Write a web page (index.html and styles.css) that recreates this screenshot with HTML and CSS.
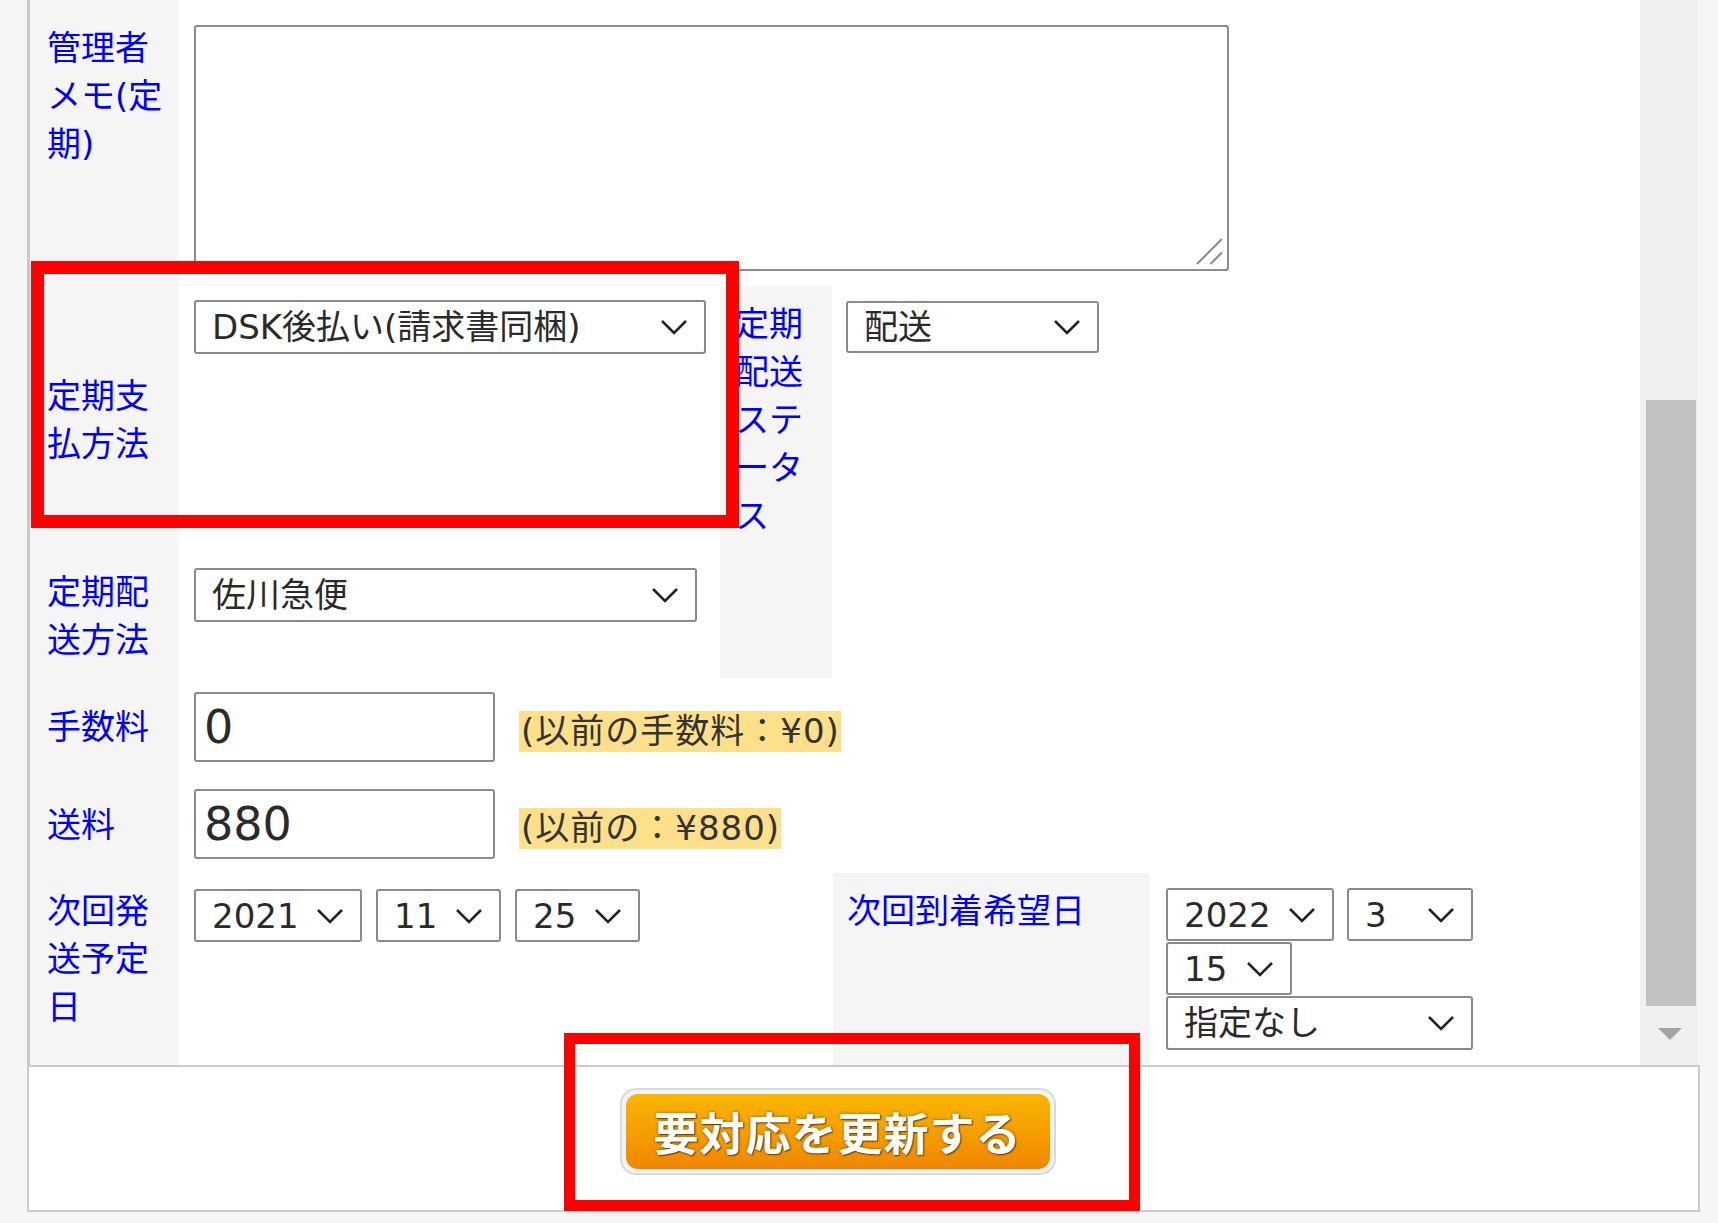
FILE: index.html
```html
<!DOCTYPE html>
<html>
<head>
  <meta charset="UTF-8">
  <title>定期受注編集</title>
  <link rel="stylesheet" href="styles.css">
</head>
<body>
<div class="panel">
  <div class="panel-body">

    <!-- 管理者メモ -->
    <div class="row row-memo">
      <div class="label label-top">管理者メモ(定期)</div>
      <div class="value value-memo">
        <div class="memo-wrap">
          <textarea class="memo"></textarea>
          <svg class="grip" viewBox="0 0 28 28">
            <line x1="2" y1="26" x2="26" y2="2"/>
            <line x1="15" y1="26" x2="26" y2="15"/>
          </svg>
        </div>
      </div>
    </div>

    <!-- 支払方法 / 配送方法 / ステータス -->
    <div class="grid-pay">
      <div class="label label-pay">定期支払方法</div>
      <div class="value value-pay">
        <div class="select select-pay">
          <select><option>DSK後払い(請求書同梱)</option></select>
          <svg viewBox="0 0 28 16"><polyline points="2,2 14,14 26,2"/></svg>
        </div>
      </div>
      <div class="label label-status">定期配送ステータス</div>
      <div class="value value-status">
        <div class="select select-status">
          <select><option>配送</option></select>
          <svg viewBox="0 0 28 16"><polyline points="2,2 14,14 26,2"/></svg>
        </div>
      </div>
      <div class="label label-ship">定期配送方法</div>
      <div class="value value-ship">
        <div class="select select-ship">
          <select><option>佐川急便</option></select>
          <svg viewBox="0 0 28 16"><polyline points="2,2 14,14 26,2"/></svg>
        </div>
      </div>
    </div>

    <!-- 手数料 -->
    <div class="row row-fee">
      <div class="label">手数料</div>
      <div class="value value-money">
        <input class="money" type="text" value="0">
        <span class="prev">(以前の手数料：¥0)</span>
      </div>
    </div>

    <!-- 送料 -->
    <div class="row row-postage">
      <div class="label">送料</div>
      <div class="value value-money">
        <input class="money" type="text" value="880">
        <span class="prev">(以前の：¥880)</span>
      </div>
    </div>

    <!-- 次回日付 -->
    <div class="grid-date">
      <div class="label label-top label-next">次回発送予定日</div>
      <div class="value value-next">
        <div class="select select-year">
          <select><option>2021</option></select>
          <svg viewBox="0 0 28 16"><polyline points="2,2 14,14 26,2"/></svg>
        </div>
        <div class="select select-day">
          <select><option>11</option></select>
          <svg viewBox="0 0 28 16"><polyline points="2,2 14,14 26,2"/></svg>
        </div>
        <div class="select select-day">
          <select><option>25</option></select>
          <svg viewBox="0 0 28 16"><polyline points="2,2 14,14 26,2"/></svg>
        </div>
      </div>
      <div class="label label-top label-arrive">次回到着希望日</div>
      <div class="value value-arrive">
        <div class="date-line">
          <div class="select select-year">
            <select><option>2022</option></select>
            <svg viewBox="0 0 28 16"><polyline points="2,2 14,14 26,2"/></svg>
          </div>
          <div class="select select-day2">
            <select><option>3</option></select>
            <svg viewBox="0 0 28 16"><polyline points="2,2 14,14 26,2"/></svg>
          </div>
        </div>
        <div class="date-line">
          <div class="select select-day2">
            <select><option>15</option></select>
            <svg viewBox="0 0 28 16"><polyline points="2,2 14,14 26,2"/></svg>
          </div>
        </div>
        <div class="date-line">
          <div class="select select-time">
            <select><option>指定なし</option></select>
            <svg viewBox="0 0 28 16"><polyline points="2,2 14,14 26,2"/></svg>
          </div>
        </div>
      </div>
    </div>

  </div>

  <div class="scrollbar">
    <div class="scroll-thumb"></div>
    <div class="scroll-arrow"></div>
  </div>
</div>

<div class="footer">
  <div class="btn-frame">
    <button class="update-button">要対応を更新する</button>
  </div>
</div>

<!-- 注釈の赤枠 -->
<div class="mark mark-pay"></div>
<div class="mark mark-button"></div>
</body>
</html>
```

FILE: styles.css
```css
* {
  box-sizing: border-box;
}

body {
  margin: 0;
  width: 1718px;
  height: 1223px;
  overflow: hidden;
  position: relative;
  background-color: #f5f5f5;
  font-family: "DejaVu Sans", "Noto Sans CJK JP", sans-serif;
  font-size: 34px;
  line-height: 48px;
  color: #222;
}

.panel {
  display: flex;
  margin-left: 27px;
  width: 1671px;
  height: 1065px;
  border-left: 3px solid #c9c9c9;
  background: #fff;
}

.panel-body {
  flex: 1;
}

/* rows */
.row {
  display: flex;
}

.label {
  width: 149px;
  flex: none;
  display: flex;
  align-items: center;
  padding: 0 8px 0 17px;
  background: #f5f5f5;
  color: #0000ff;
}

.label-top {
  align-items: flex-start;
}

.value {
  flex: 1;
}

.row-memo {
  height: 286px;
}

.row-memo .label {
  padding-top: 24px;
}

.value-memo {
  padding: 25px 0 0 15px;
}

.memo-wrap {
  position: relative;
  width: 1035px;
  height: 246px;
}

.memo {
  display: block;
  width: 100%;
  height: 100%;
  border: 2px solid #8a8a8a;
  border-radius: 3px;
  resize: none;
  background: #fff;
}

.grip {
  position: absolute;
  right: 5px;
  bottom: 5px;
  width: 29px;
  height: 29px;
  stroke: #8a8a8a;
  stroke-width: 2;
}

/* payment / shipping grid */
.grid-pay {
  display: grid;
  grid-template-columns: 149px 541px 112px 1fr;
  grid-template-rows: 268px 124px;
}

.label-pay {
  grid-column: 1;
  grid-row: 1;
}

.value-pay {
  grid-column: 2;
  grid-row: 1;
  padding: 14px 0 0 15px;
}

.label-status {
  grid-column: 3;
  grid-row: 1 / 3;
  width: auto;
  align-items: flex-start;
  padding: 14px 0 0 15px;
}

.value-status {
  grid-column: 4;
  grid-row: 1 / 3;
  padding: 15px 0 0 14px;
}

.label-ship {
  grid-column: 1;
  grid-row: 2;
}

.value-ship {
  grid-column: 2;
  grid-row: 2;
  padding: 14px 0 0 15px;
}

/* selects */
.select {
  position: relative;
  display: inline-block;
  flex: none;
  height: 54px;
}

.select select {
  -webkit-appearance: none;
  appearance: none;
  display: block;
  width: 100%;
  height: 100%;
  margin: 0;
  padding: 0 0 0 16px;
  font: inherit;
  font-size: 34px;
  color: #2a2a2a;
  background: #fff;
  border: 2px solid #8a8a8a;
  border-radius: 3px;
}

.select svg {
  position: absolute;
  right: 18px;
  top: 50%;
  margin-top: -8px;
  width: 28px;
  height: 16px;
  fill: none;
  stroke: #222;
  stroke-width: 2.6;
  pointer-events: none;
}

.select-pay {
  width: 512px;
}

.select-ship {
  width: 503px;
}

.select-status {
  width: 253px;
  height: 52px;
}

.select-year {
  width: 168px;
  height: 53px;
}

.select-day {
  width: 125px;
  height: 53px;
}

.select-day2 {
  width: 126px;
  height: 53px;
}

.select-time {
  width: 307px;
  height: 54px;
}

/* money */
.row-fee {
  height: 98px;
}

.row-postage {
  height: 97px;
}

.value-money {
  display: flex;
  align-items: flex-start;
  padding-left: 15px;
}

.money {
  width: 301px;
  height: 70px;
  margin: 14px 0 0;
  padding: 0 8px;
  font: inherit;
  font-size: 46px;
  color: #2a2a2a;
  border: 2px solid #8a8a8a;
  border-radius: 3px;
}

.row-postage .money {
  margin-top: 13px;
}

.prev {
  margin: 33px 0 0 24px;
  padding: 0 1px 0 2px;
  height: 41px;
  line-height: 41px;
  letter-spacing: 1px;
  background: #ffe08a;
  color: #333;
}

.row-postage .prev {
  margin-top: 32px;
}

/* dates */
.grid-date {
  display: grid;
  grid-template-columns: 149px 654px 317px 1fr;
  height: 192px;
}

.label-next {
  padding-top: 14px;
}

.value-next {
  display: flex;
  align-items: flex-start;
  gap: 14px;
  padding: 16px 0 0 15px;
}

.label-arrive {
  width: auto;
  padding: 14px 0 0 14px;
}

.value-arrive {
  display: flex;
  flex-direction: column;
  gap: 1px;
  padding: 15px 0 0 16px;
}

.date-line {
  display: flex;
  gap: 13px;
}

/* scrollbar */
.scrollbar {
  width: 58px;
  flex: none;
  background: #f0f0f0;
  display: flex;
  flex-direction: column;
}

.scroll-thumb {
  margin: 400px 0 0 6px;
  width: 50px;
  height: 606px;
  background: #c1c1c1;
}

.scroll-arrow {
  margin: 22px 0 0 18px;
  width: 0;
  height: 0;
  border-left: 12px solid transparent;
  border-right: 12px solid transparent;
  border-top: 12px solid #a3a3a3;
}

/* footer */
.footer {
  display: flex;
  justify-content: center;
  align-items: flex-start;
  margin-left: 27px;
  width: 1673px;
  height: 147px;
  padding: 21px 52px 0 0;
  border: 2px solid #cccccc;
  background: #fff;
}

.btn-frame {
  width: 436px;
  height: 87px;
  padding: 4px;
  border: 2px solid #d9d9d9;
  border-radius: 16px;
  background: #f3f3f3;
}

.update-button {
  display: block;
  width: 100%;
  height: 100%;
  border: none;
  border-radius: 12px;
  background: linear-gradient(#fab700, #f08600);
  color: #fff;
  font-family: "Noto Sans CJK JP", sans-serif;
  font-size: 45px;
  font-weight: bold;
  letter-spacing: 1px;
  text-shadow: 1px 1px 1px #6b4000, 0 0 3px rgba(80, 40, 0, 0.6);
  cursor: pointer;
}

/* annotation boxes */
.mark {
  position: absolute;
  border: 13px solid #ff0000;
}

.mark-pay {
  left: 31px;
  top: 261px;
  width: 708px;
  height: 267px;
}

.mark-button {
  left: 564px;
  top: 1033px;
  width: 576px;
  height: 178px;
  border-width: 11px;
}
```
